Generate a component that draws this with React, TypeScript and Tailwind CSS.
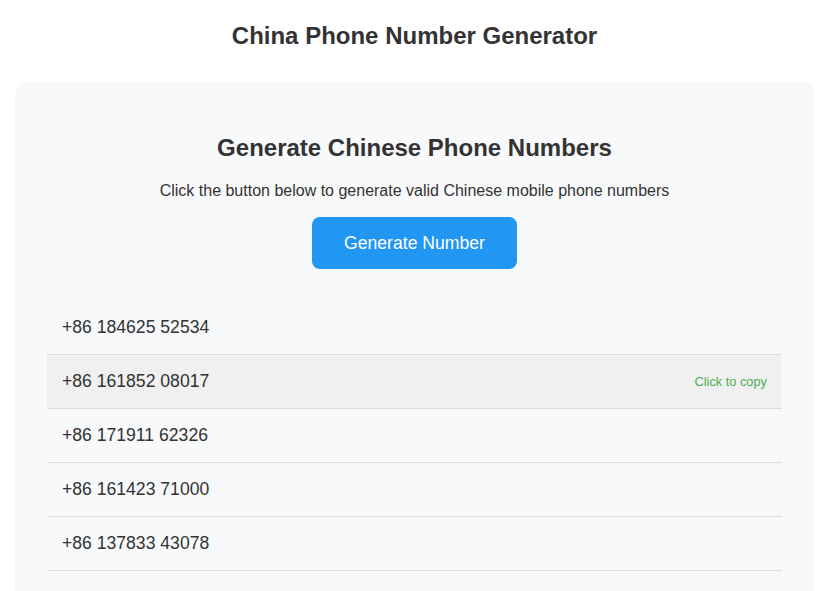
const numbers = [
  '+86 184625 52534',
  '+86 161852 08017',
  '+86 171911 62326',
  '+86 161423 71000',
  '+86 137833 43078',
];

export default function App() {
  return (
    <div className="min-h-screen bg-white text-[#333]" style={{ fontFamily: 'Arial, "Liberation Sans", sans-serif' }}>
      <h1 className="pt-[21px] pb-[31px] pl-[2px] text-center text-[24px] font-bold leading-[30px] text-[#333]">
        China Phone Number Generator
      </h1>
      <div className="ml-[15px] w-[799px] rounded-xl bg-[#f8f9fa] px-8 pt-[30px] pb-8">
        <h2 className="mt-[21px] text-center text-[24px] font-bold leading-[30px] text-[#333]">
          Generate Chinese Phone Numbers
        </h2>
        <p className="mt-[18px] text-center text-[16px] leading-[20px] text-[#333]">
          Click the button below to generate valid Chinese mobile phone numbers
        </p>
        <div className="mt-[16px] flex justify-center">
          <button className="h-[52px] w-[205px] rounded-lg bg-[#2196f3] text-[17.6px] text-white">
            Generate Number
          </button>
        </div>
        <ul className="mt-[32px]">
          {numbers.map((n, i) => (
            <li
              key={n}
              className={`flex h-[54px] items-center justify-between border-b border-[#ddd] px-[15px] ${i === 1 ? 'bg-[#f0f0f0]' : ''}`}
            >
              <span className="text-[17.6px] text-[#333]">{n}</span>
              {i === 1 && <span className="text-[12.8px] text-[#4caf50]">Click to copy</span>}
            </li>
          ))}
        </ul>
      </div>
    </div>
  );
}
